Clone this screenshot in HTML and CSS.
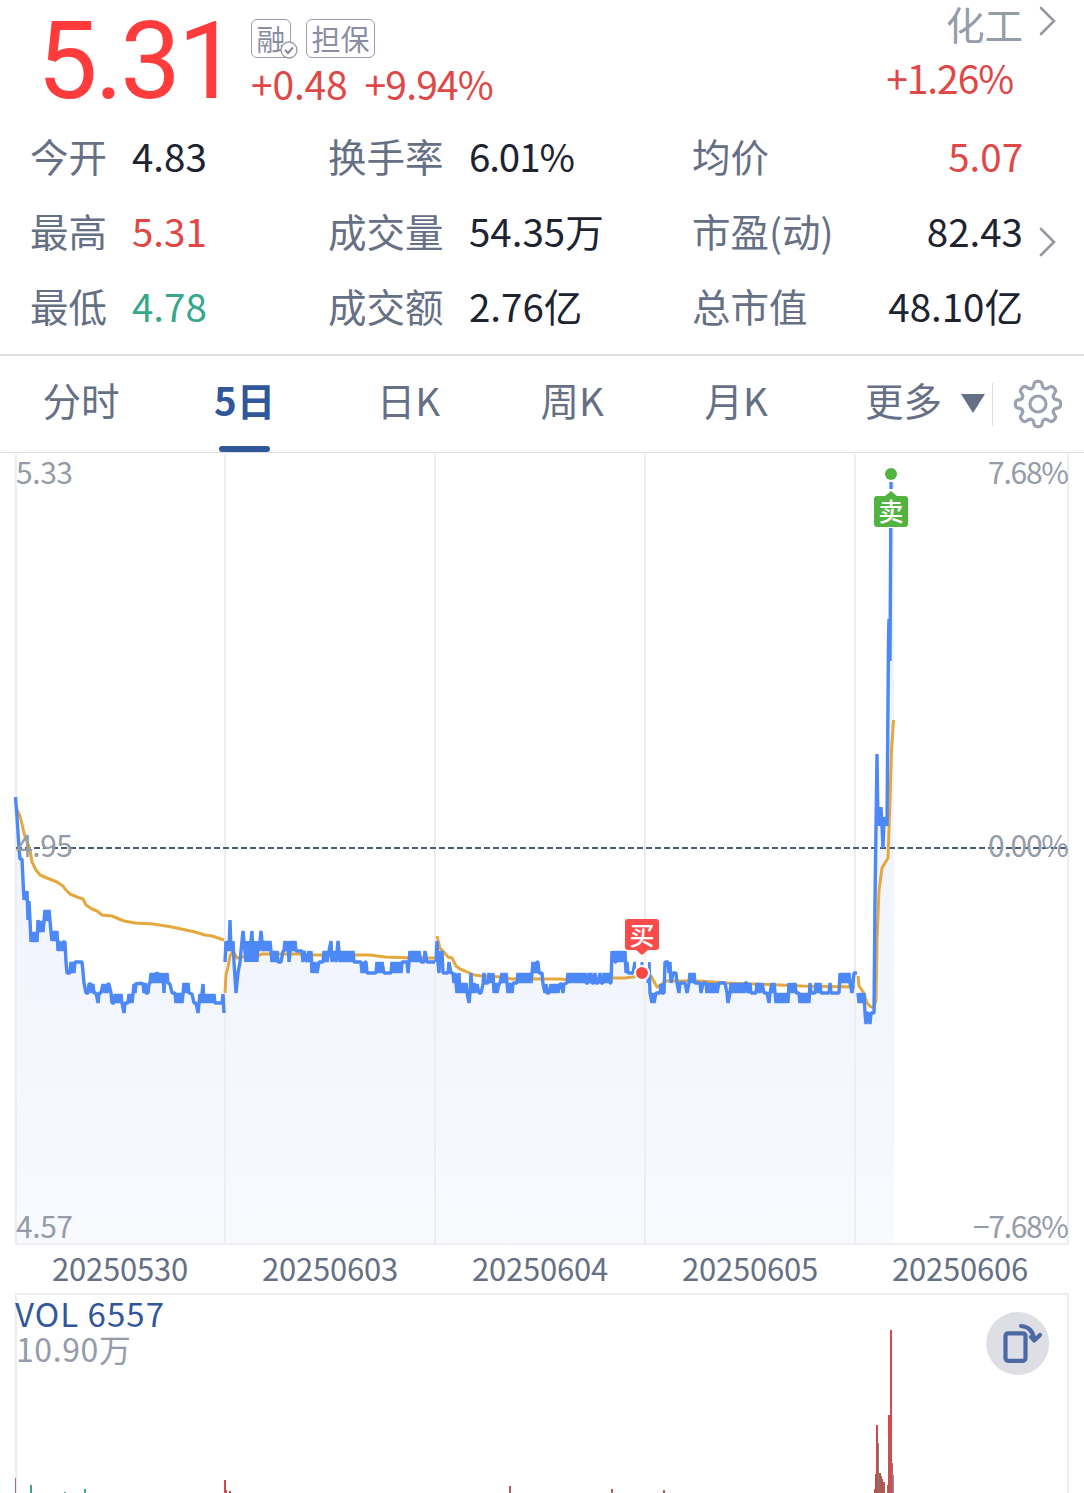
FILE: index.html
```html
<!DOCTYPE html>
<html lang="zh-CN">
<head>
    <meta charset="UTF-8">
    <meta name="viewport" content="width=device-width, initial-scale=1.0">
    <title>5日走势</title>
    <link rel="stylesheet" href="styles.css">
</head>
<body>
    <header class="quote">
        <div class="quote-top">
            <div class="price">5.31</div>
            <div class="change">
                <div class="tags">
                    <span class="tag tag-rong">融
                        <svg class="tag-check" width="18" height="18" viewBox="0 0 18 18">
                            <circle cx="9" cy="9" r="8" fill="#fff" stroke="#9496aa" stroke-width="1.3"/>
                            <path d="M5 9l3 3 5-5.500" fill="none" stroke="#85889f" stroke-width="2"/>
                        </svg>
                    </span>
                    <span class="tag tag-danbao">担保</span>
                </div>
                <div class="change-values"><span>+0.48</span><span>+9.94%</span></div>
            </div>
            <div class="sector">
                <div class="sector-name">化工</div>
                <div class="sector-change">+1.26%</div>
            </div>
            <svg class="arrow" width="18" height="30" viewBox="0 0 18 30"><path d="M2 2l13 13L2 28"/></svg>
        </div>
        <div class="stats">
            <span class="label">今开</span><span class="value">4.83</span>
            <span class="label">换手率</span><span class="value percent">6.01%</span>
            <span class="label">均价</span><span class="value right red">5.07</span>
            <span class="label">最高</span><span class="value red">5.31</span>
            <span class="label">成交量</span><span class="value">54.35万</span>
            <span class="label">市盈(动)</span><span class="value right">82.43</span>
            <span class="label">最低</span><span class="value green">4.78</span>
            <span class="label">成交额</span><span class="value">2.76亿</span>
            <span class="label">总市值</span><span class="value right">48.10亿</span>
            <svg class="arrow arrow-stats" width="18" height="30" viewBox="0 0 18 30"><path d="M2 2l13 13L2 28"/></svg>
        </div>
    </header>

    <nav class="tabs">
        <a class="tab">分时</a>
        <a class="tab active">5日</a>
        <a class="tab">日K</a>
        <a class="tab">周K</a>
        <a class="tab">月K</a>
        <a class="more">更多<i class="caret"></i></a>
        <span class="settings">
            <svg width="50" height="50" viewBox="-25 -25 50 50">
                <path id="gear" fill="none" stroke="#9ca1b1" stroke-width="3.200" stroke-linejoin="round"/>
                <circle r="8" fill="none" stroke="#9ca1b1" stroke-width="3.200"/>
            </svg>
        </span>
    </nav>

    <svg class="chart" width="1084" height="793" viewBox="0 453 1084 793">
        <defs>
            <linearGradient id="fade" gradientUnits="userSpaceOnUse" x1="0" y1="480" x2="0" y2="1244">
                <stop offset="0" stop-color="#ecf1fc"/>
                <stop offset="0.700" stop-color="#f3f6fd"/>
                <stop offset="1" stop-color="#f9fafe"/>
            </linearGradient>
        </defs>
        <g id="areas" fill="url(#fade)"></g>
        <path class="grid" d="M16 454V1244H1068V454M225 454V1244M435 454V1244M645 454V1244M855 454V1244"/>
        <path d="M16 848H1068" stroke="#4a5b74" stroke-width="2" stroke-dasharray="6 3"/>
        <g class="avg">
            <polyline points="16,808 18,812 20,816 22,824 24,833 27,842 30,850 32,862 36,870 40,875 47,878 52,880 57,882 63,886 65,889 70,894 77,897 83,899 86,905 92,909 97,911 102,915 112,916 124,921 135,923 153,924 172,927 195,932 205,935 212,936 224,940"/>
            <polyline points="225,993 226,975 228,967 230,956 233,951 237,958 243,957 257,956 262,954 300,954 315,955 370,955 385,957 412,958 435,958"/>
            <polyline points="437,936 440,948 443,951 448,957 452,958 456,966 460,969 465,971 474,975 482,976 502,977 512,979 560,979 570,980 600,979 613,978 625,978 640,976"/>
            <polyline points="645,973 651,976 657,987 662,984 666,981 700,981 727,983 780,985 802,986 855,987"/>
            <polyline points="858,976 859,986 864,993 867,1003 871,1007 874,1007 876,1000 877,940 879,890 882,868 888,858 890,800 891.500,750 893.500,720"/>
        </g>
        <g id="lines" class="line"></g>
        <g class="axis">
            <text x="16" y="484" textLength="57">5.33</text>
            <text x="16" y="857" textLength="57">4.95</text>
            <text x="16" y="1238" textLength="57">4.57</text>
            <text x="988" y="484" textLength="81">7.68%</text>
            <text x="988" y="857" textLength="81">0.00%</text>
            <text x="973" y="1238" textLength="96">−7.68%</text>
        </g>
        <!-- buy -->
        <rect x="636" y="962" width="12" height="14" fill="#fff"/>
        <path d="M642 962v4" stroke="#4d88f7" stroke-width="3"/>
        <circle cx="642" cy="973" r="7" fill="#fa4545" stroke="#fff" stroke-width="2"/>
        <path d="M628 919h28q3 0 3 3v25q0 3-3 3h-8l-6 5-6-5h-8q-3 0-3-3v-25q0-3 3-3z" fill="#f94b4b"/>
        <text class="mark" x="642" y="944.500">买</text>
        <!-- sell -->
        <rect x="888" y="465" width="6" height="17" fill="#fff"/>
        <circle cx="891" cy="474" r="6" fill="#53b340"/>
        <rect x="886" y="489" width="10" height="39" fill="#fff"/>
        <path d="M877 496h8l6-5 6 5h8q3 0 3 3v25q0 3-3 3h-28q-3 0-3-3v-25q0-3 3-3z" fill="#53b340"/>
        <text class="mark" x="891" y="520.500">卖</text>
    </svg>

    <div class="dates">
        <span>20250530</span><span>20250603</span><span>20250604</span><span>20250605</span><span>20250606</span>
    </div>

    <section class="volume">
        <svg class="chart" width="1084" height="200" viewBox="0 1293 1084 200">
            <path class="grid" d="M16 1493V1294H1068V1493"/>
            <g id="bars"></g>
            <text class="vol-name" x="15" y="1327" textLength="149">VOL 6557</text>
            <text class="vol-max" x="16" y="1362" textLength="115">10.90万</text>
            <circle cx="1017.700" cy="1343.500" r="31.500" fill="#dedfe5"/>
            <g fill="none" stroke="#4c69a4" stroke-width="4.200" stroke-linecap="round" stroke-linejoin="round">
                <rect x="1005.500" y="1333.300" width="20" height="27.500" rx="2.500"/>
                <path d="M1021 1326q12 1 13.300 14M1031 1337l3.300 3.500 5.700-5.500"/>
            </g>
        </svg>
    </section>

    <script>
        // one string of x,y points per trading day
        const days = [
            '15.5,797 17,817 19,848 20,859 22,859 23,880 24,900 25,891 26,900 27,891 28,920 29,901 30,920 31,942 32,932 33,942 34,932 35,942 36,932 37,942 38,920 39,932 40,921 41,932 42,921 43,932 45,910 46,921 47,910 48,921 49,910 50,921 51,932 52,941 53,931 54,941 55,931 56,941 57,931 58,951 59,941 60,951 61,942 62,951 63,942 65,942 66,962 67,973 70,973 71,962 72,973 73,962 74,973 75,962 82,962 83,972 84,983 86,993 88,993 89,984 91,984 92,993 93,984 94,993 96,993 98,1003 99,993 101,993 103,984 105,993 106,984 107,993 108,984 109,984 111,993 112,1003 114,1003 115,994 116,1003 117,994 118,1003 119,994 120,1003 121,994 122,1003 124,1013 125,1003 128,1003 129,994 130,1003 131,994 132,1003 133,994 134,984 135,993 136,983 137,984 138,983 139,984 141,983 142,984 143,983 144,993 145,983 146,993 148,993 149,984 150,983 151,973 152,983 153,973 154,983 155,973 156,983 157,972 158,983 159,973 160,983 161,973 162,983 163,973 164,993 165,973 166,983 167,973 168,983 170,984 172,993 175,993 176,1003 177,993 178,1003 179,993 180,1003 181,993 182,1003 183,994 184,983 185,993 186,983 187,993 188,983 189,993 192,994 194,1003 196,1003 198,1013 200,994 201,1003 203,984 204,1003 205,994 206,1003 207,994 208,1003 209,994 210,1003 211,994 213,1003 214,994 215,1003 222,1003 223,994 224,1013',
            '225,962 226,941 227,951 228,941 229,951 230,920 231,951 233,941 234,962 236,993 238,973 240,962 241,951 243,931 245,951 246,962 247,941 248,962 249,941 250,962 251,941 252,931 253,962 254,941 255,962 256,941 257,962 258,941 259,951 261,931 263,951 264,941 265,951 266,941 267,951 268,941 269,951 270,941 271,951 272,962 273,951 274,962 275,951 276,962 277,951 278,962 281,962 283,951 284,951 285,941 286,951 288,941 289,962 291,941 292,951 293,941 294,951 295,941 296,951 302,951 303,962 304,951 307,962 309,951 310,962 311,951 312,973 313,962 314,973 315,962 317,973 319,962 323,962 324,951 325,962 326,951 327,962 329,951 331,941 332,962 334,951 336,962 338,941 339,951 340,962 341,951 342,962 343,951 344,962 345,951 346,962 347,951 348,962 349,951 350,962 351,951 352,962 353,951 354,962 361,962 362,973 363,962 364,973 365,962 366,962 367,973 376,973 377,962 378,973 379,962 381,973 382,962 384,973 391,973 392,962 393,973 394,962 395,973 396,962 397,973 398,962 399,973 400,962 401,973 402,962 407,962 408,973 410,951 412,962 413,951 415,962 416,951 418,962 419,951 421,962 424,962 425,951 427,962 435,962',
            '436,962 437,941 438,962 439,973 440,951 441,962 442,951 443,973 448,973 449,962 451,973 453,973 454,983 455,973 456,983 457,993 458,983 459,973 460,993 461,983 462,993 463,983 465,993 466,983 467,993 469,1003 470,993 471,973 472,993 474,983 475,993 477,984 479,993 481,993 483,984 484,973 485,983 488,983 489,973 491,983 493,973 494,993 496,983 497,993 499,984 500,983 502,973 503,983 504,973 505,983 506,973 507,983 508,993 509,983 510,993 511,983 512,993 513,983 514,983 517,983 518,973 519,983 520,973 521,983 522,973 523,983 525,973 526,983 528,973 529,983 530,973 531,983 532,973 533,962 534,973 535,962 536,973 537,962 538,962 539,973 542,973 543,984 545,993 546,984 547,993 549,993 551,984 552,993 553,984 554,993 555,984 556,993 557,984 558,993 560,984 562,984 563,993 564,984 567,983 568,973 569,983 570,973 571,983 572,973 573,983 575,973 576,983 577,973 578,983 579,973 580,983 581,973 582,983 583,973 584,983 585,973 586,983 588,983 589,973 590,983 591,973 592,983 594,983 595,973 596,983 598,983 600,973 601,983 603,983 604,973 605,983 606,973 607,983 609,973 610,983 611,983 612,951 613,962 614,951 615,962 616,962 617,951 618,962 619,951 620,962 621,951 622,962 623,951 624,962 625,951 626,973 627,962 628,973 629,973 633,973 635,962 637,973 640,973',
            '648,983 649,962 650,993 652,1003 653,993 654,1003 656,993 660,993 661,984 662,993 664,993 665,962 668,962 669,973 670,962 671,983 673,973 676,973 677,983 679,993 680,983 685,983 687,993 689,983 690,973 691,983 692,973 693,983 694,973 695,983 700,983 701,993 703,983 706,983 707,993 708,983 709,993 710,983 711,993 712,983 713,993 714,983 715,993 716,983 717,993 719,983 725,983 727,993 728,1003 730,993 731,983 732,993 733,983 734,993 735,983 736,993 737,983 738,993 739,983 740,993 741,983 742,993 743,983 744,993 745,983 747,983 748,993 750,983 751,993 753,993 756,993 757,983 758,993 759,983 760,993 762,983 764,993 767,993 769,1003 770,993 772,983 773,993 774,983 775,993 776,1003 777,993 778,1003 779,993 780,1003 781,993 782,1003 783,993 784,1003 785,993 786,1003 787,993 788,1003 789,983 790,993 791,983 792,993 793,983 794,993 795,983 796,993 799,993 800,1003 802,993 803,1003 804,993 805,1003 806,993 807,1003 808,993 809,1003 810,983 811,993 815,993 816,983 817,993 818,983 819,993 820,983 821,993 824,993 829,993 830,983 831,993 839,993 840,973 841,983 842,973 843,983 845,973 846,983 847,973 848,983 849,973 850,983 852,993 854,973 857,973',
            '858,993 859,1003 860,993 861,1003 862,993 863,1003 864,993 865,1013 866,1024 867,1013 868,1013 870,1024 871,1013 874,1013 875,900 877,754 878,826 879,807 880,826 881,807 882,826 883,848 884,817 885,826 886,817 887,826 888.500,640 889,619 890,661 891,482'
        ];
        const areas = document.getElementById('areas');
        const lines = document.getElementById('lines');
        let areaHtml = '';
        let lineHtml = '';
        days.forEach((points, i) => {
            const start = 15 + i * 210;
            const startY = points.split(' ')[0].split(',')[1];
            const end = i === 4 ? 894 : start + 210;
            const tail = i === 4 ? '894,482' : end + ',973';
            areaHtml += `<polygon points="${start},1244 ${start},${startY} ${points} ${tail} ${end},1244"/>`;
            lineHtml += `<polyline points="${points}"/>`;
        });
        areas.innerHTML = areaHtml;
        lines.innerHTML = lineHtml;

        // x, top, width, color
        const bars = [
            [15, 1478, 1, '#b56a72'], [30, 1485, 2, '#3fa08c'], [64, 1492, 2, '#3fa08c'], [84, 1489, 2, '#3fa08c'],
            [224, 1480, 2, '#d0484c'], [226, 1490, 1, '#b0504f'], [229, 1491, 2, '#b0504f'],
            [509, 1486, 2, '#b35a5a'], [611, 1489, 2, '#b35a5a'], [663, 1490, 2, '#b35a5a'],
            [874, 1489, 1, '#d0484c'], [875, 1474, 1, '#b0504f'], [876, 1425, 2, '#d0484c'], [877, 1475, 1, '#a35f56'],
            [878, 1443, 1, '#6a8a7c'], [879, 1473, 2, '#a35f56'], [881, 1476, 1, '#c84c4c'],
            [882, 1479, 1, '#b94e4c'], [883, 1482, 2, '#b55a52'], [887, 1485, 1, '#8a7268'],
            [888, 1415, 2, '#e04444'], [890, 1330, 2, '#d9484b'], [889, 1438, 1, '#8a7268'],
            [892, 1463, 1, '#a56f80'], [893, 1475, 1, '#96859a']
        ];
        document.getElementById('bars').innerHTML = bars.map(([x, top, w, color]) =>
            `<rect x="${x}" y="${top}" width="${w}" height="${1493 - top}" fill="${color}"/>`).join('');

        // gear outline with eight rounded teeth
        let d = '';
        for (let a = 0; a <= 360; a += 3) {
            const wave = Math.cos(a * 8 * Math.PI / 180) + 0.15;
            const r = 19.6 + 3.1 * Math.tanh(wave * 1.8);
            const t = a * Math.PI / 180;
            d += (a ? 'L' : 'M') + (r * Math.sin(t)).toFixed(2) + ' ' + (-r * Math.cos(t)).toFixed(2);
        }
        document.getElementById('gear').setAttribute('d', d + 'Z');
    </script>
</body>
</html>
```

FILE: styles.css
```css
* {
    box-sizing: border-box;
}
body {
    margin: 0;
    width: 1084px;
    height: 1493px;
    overflow: hidden;
    background-color: #fff;
    font-family: "Noto Sans CJK SC", sans-serif;
    color: #1d2330;
}
.quote {
    height: 356px;
    border-bottom: 2px solid #dfdfe1;
}
.quote-top {
    display: flex;
    height: 118px;
    padding-left: 37px;
}
.price {
    width: 214px;
    font-family: Roboto, sans-serif;
    font-size: 108px;
    line-height: 122px;
    letter-spacing: -3px;
    color: #ff3b3b;
}
.change {
    padding-top: 19px;
}
.tags {
    display: flex;
    gap: 15px;
    height: 38px;
}
.tag {
    position: relative;
    height: 39px;
    border: 1.5px solid #9a9cb0;
    border-radius: 6px;
    font-size: 29px;
    line-height: 36px;
    text-align: center;
    color: #8b8ea3;
}
.tag-rong {
    width: 40px;
}
.tag-danbao {
    width: 69px;
}
.tag-check {
    position: absolute;
    right: -8px;
    bottom: -2px;
}
.change-values {
    display: flex;
    gap: 17px;
    font-size: 39px;
    line-height: 52px;
    letter-spacing: -0.8px;
    color: #e04848;
}
.change-values span:first-child {
    letter-spacing: -0.2px;
}
.sector {
    margin-left: auto;
    text-align: right;
}
.sector-name {
    margin-top: -5px;
    font-size: 38.5px;
    line-height: 56px;
    color: #959caa;
}
.sector-change {
    margin-right: 10px;
    font-size: 39px;
    line-height: 52px;
    letter-spacing: -1.1px;
    color: #e04848;
}
.arrow {
    margin: 6px 27px 0 16px;
    fill: none;
    stroke: #96989f;
    stroke-width: 2.6;
    stroke-linecap: round;
}
.stats {
    position: relative;
    display: grid;
    grid-template-columns: 102px 196px 141px 223px 180px 151px;
    grid-auto-rows: 75px;
    padding-left: 30px;
    font-size: 38.5px;
    line-height: 75px;
    white-space: nowrap;
}
.label {
    color: #667085;
}
.percent {
    letter-spacing: -1.1px;
}
.right {
    text-align: right;
}
.red {
    color: #e04848;
}
.green {
    color: #36a78b;
}
.arrow-stats {
    position: absolute;
    right: 27px;
    top: 109px;
    margin: 0;
}
.tabs {
    display: flex;
    height: 97px;
    border-bottom: 1px solid #dcdde0;
    font-size: 38.5px;
    line-height: 87px;
    color: #667085;
}
.tab {
    position: relative;
    width: 163.8px;
    text-align: center;
    text-indent: -2px;
}
.active {
    font-weight: 700;
    color: #31579b;
}
.active::after {
    content: "";
    position: absolute;
    left: 55px;
    bottom: 0;
    width: 51px;
    height: 6px;
    border-radius: 3px;
    background-color: #31579b;
}
.more {
    display: flex;
    width: 173px;
    padding-left: 46px;
    white-space: nowrap;
}
.caret {
    align-self: flex-start;
    margin: 38px 0 0 19px;
    border: 12px solid transparent;
    border-top: 19px solid #667085;
    border-bottom: 0;
}
.settings {
    height: 43px;
    margin-top: 27px;
    padding-left: 20px;
    border-left: 1px solid #dcdde0;
    line-height: 0;
}
.settings svg {
    margin-top: -4px;
}
.chart {
    display: block;
}
.grid {
    fill: none;
    stroke: #edeef0;
    stroke-width: 2;
}
.avg {
    fill: none;
    stroke: #e5a83f;
    stroke-width: 3;
    stroke-linejoin: round;
}
.line {
    fill: none;
    stroke: #4d88f7;
    stroke-width: 3.4;
    stroke-linejoin: bevel;
}
.axis {
    font-size: 30px;
    fill: #959ba8;
}
.mark {
    font-size: 25px;
    font-weight: 500;
    text-anchor: middle;
    fill: #fff;
}
.dates {
    display: flex;
    height: 47px;
    padding-left: 15px;
    font-size: 31px;
    line-height: 43px;
    letter-spacing: -0.2px;
    color: #667085;
}
.dates span {
    width: 210px;
    text-align: center;
}
.vol-name {
    font-size: 33px;
    fill: #31579b;
}
.vol-max {
    font-size: 32px;
    fill: #959ba8;
}
```
